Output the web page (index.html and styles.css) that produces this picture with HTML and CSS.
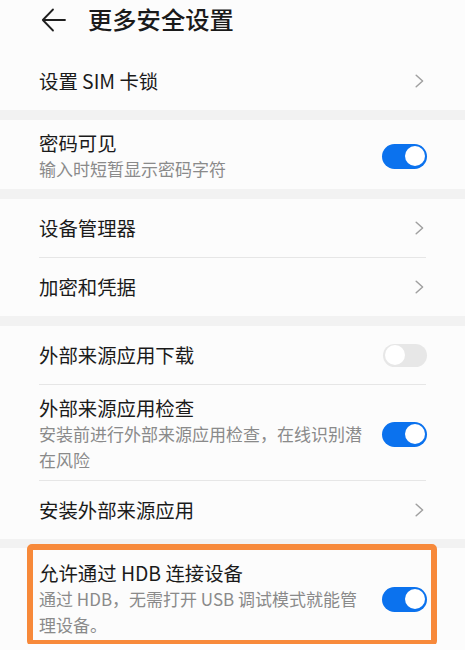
FILE: index.html
```html
<!DOCTYPE html>
<html lang="zh-CN">
<head>
<meta charset="utf-8">
<title>更多安全设置</title>
<link rel="stylesheet" href="styles.css">
</head>
<body>
<div class="page">
  <header class="topbar">
    <svg class="back" width="25" height="24" viewBox="0 0 25 24" aria-hidden="true">
      <path d="M12 1.5 L1.8 12 L12 22.5 M1.8 12 H24" fill="none" stroke="#1f1f1f" stroke-width="1.8" stroke-linecap="round" stroke-linejoin="round"/>
    </svg>
    <h1 class="title">更多安全设置</h1>
  </header>

  <section class="group">
    <div class="row">
      <span class="text"><span class="label">设置 SIM 卡锁</span></span>
      <svg class="chev" width="9" height="14" viewBox="0 0 9 14" aria-hidden="true"><path d="M1.2 1.2 L7.6 7 L1.2 12.8" fill="none" stroke="#a0a0a0" stroke-width="1.5" stroke-linecap="round" stroke-linejoin="round"/></svg>
    </div>
  </section>

  <section class="group">
    <div class="row tall">
      <span class="text">
        <span class="label">密码可见</span>
        <span class="sub">输入时短暂显示密码字符</span>
      </span>
      <span class="toggle on"><span class="knob"></span></span>
    </div>
  </section>

  <section class="group">
    <div class="row">
      <span class="text"><span class="label">设备管理器</span></span>
      <svg class="chev" width="9" height="14" viewBox="0 0 9 14" aria-hidden="true"><path d="M1.2 1.2 L7.6 7 L1.2 12.8" fill="none" stroke="#a0a0a0" stroke-width="1.5" stroke-linecap="round" stroke-linejoin="round"/></svg>
    </div>
    <div class="divider"></div>
    <div class="row">
      <span class="text"><span class="label">加密和凭据</span></span>
      <svg class="chev" width="9" height="14" viewBox="0 0 9 14" aria-hidden="true"><path d="M1.2 1.2 L7.6 7 L1.2 12.8" fill="none" stroke="#a0a0a0" stroke-width="1.5" stroke-linecap="round" stroke-linejoin="round"/></svg>
    </div>
  </section>

  <section class="group">
    <div class="row">
      <span class="text"><span class="label">外部来源应用下载</span></span>
      <span class="toggle off"><span class="knob"></span></span>
    </div>
    <div class="divider"></div>
    <div class="row tall">
      <span class="text">
        <span class="label">外部来源应用检查</span>
        <span class="sub">安装前进行外部来源应用检查，在线识别潜在风险</span>
      </span>
      <span class="toggle on"><span class="knob"></span></span>
    </div>
    <div class="divider"></div>
    <div class="row">
      <span class="text"><span class="label">安装外部来源应用</span></span>
      <svg class="chev" width="9" height="14" viewBox="0 0 9 14" aria-hidden="true"><path d="M1.2 1.2 L7.6 7 L1.2 12.8" fill="none" stroke="#a0a0a0" stroke-width="1.5" stroke-linecap="round" stroke-linejoin="round"/></svg>
    </div>
  </section>

  <section class="group last">
    <div class="row tall hdb">
      <span class="text">
        <span class="label">允许通过 HDB 连接设备</span>
        <span class="sub">通过 HDB，无需打开 USB 调试模式就能管理设备。</span>
      </span>
      <span class="toggle on"><span class="knob"></span></span>
      <span class="highlight"></span>
    </div>
  </section>
</div>
</body>
</html>
```

FILE: styles.css
```css
html, body {
  margin: 0;
  padding: 0;
  background: #fcfcfc;
}

body {
  font-family: "Noto Sans CJK SC", "Noto Sans", "Liberation Sans", sans-serif;
  color: #1a1a1a;
  overflow: hidden;
}

.page {
  display: flex;
  flex-direction: column;
  background: #f2f2f2;
  gap: 10px;
}

.page > .last {
  margin-top: -1px;
}

.topbar {
  display: flex;
  align-items: center;
  height: 38px;
  padding: 0 0 14px 41px;
  background: #fcfcfc;
  margin-bottom: -10px;
}

.back {
  display: block;
  margin-top: 1px;
}

.title {
  margin: 0 0 0 22px;
  font-size: 24.3px;
  font-weight: 500;
  line-height: 38px;
  color: #1a1a1a;
}

.group {
  background: #fcfcfc;
  display: flex;
  flex-direction: column;
}

.row {
  display: flex;
  align-items: center;
  height: 58px;
  padding: 0 38px 0 39px;
  box-sizing: border-box;
}

.row.tall {
  height: auto;
  padding-top: 10px;
  padding-bottom: 7px;
}

.row.hdb {
  position: relative;
  padding-top: 12px;
  padding-bottom: 6px;
}

.text {
  flex: 1;
  display: flex;
  flex-direction: column;
  min-width: 0;
}

.label {
  font-size: 19.4px;
  line-height: 26px;
  color: #1a1a1a;
}

.sub {
  font-size: 17px;
  line-height: 26px;
  color: #8a8a8a;
}

.chev {
  display: block;
  margin-right: 3px;
  flex: none;
}

.divider {
  height: 1px;
  margin: 0 39px;
  background: #e6e6e6;
}

.toggle {
  flex: none;
  position: relative;
  width: 45px;
  height: 25px;
  border-radius: 12.5px;
  margin-left: 16px;
  box-sizing: border-box;
}

.toggle.on {
  background: #0b72ee;
}

.toggle.off {
  background: #e7e7e7;
  width: 44px;
  height: 23px;
}

.knob {
  position: absolute;
  top: 2.5px;
  width: 20px;
  height: 20px;
  border-radius: 50%;
  background: #ffffff;
}

.toggle.on .knob {
  right: 2.5px;
}

.toggle.off .knob {
  left: 1.5px;
  top: 1.5px;
  background: #ffffff;
}

.highlight {
  position: absolute;
  left: 27px;
  top: -4px;
  width: 410px;
  height: 102px;
  box-sizing: border-box;
  border: 6.5px solid #f7893a;
  border-radius: 5px;
  pointer-events: none;
}
```
